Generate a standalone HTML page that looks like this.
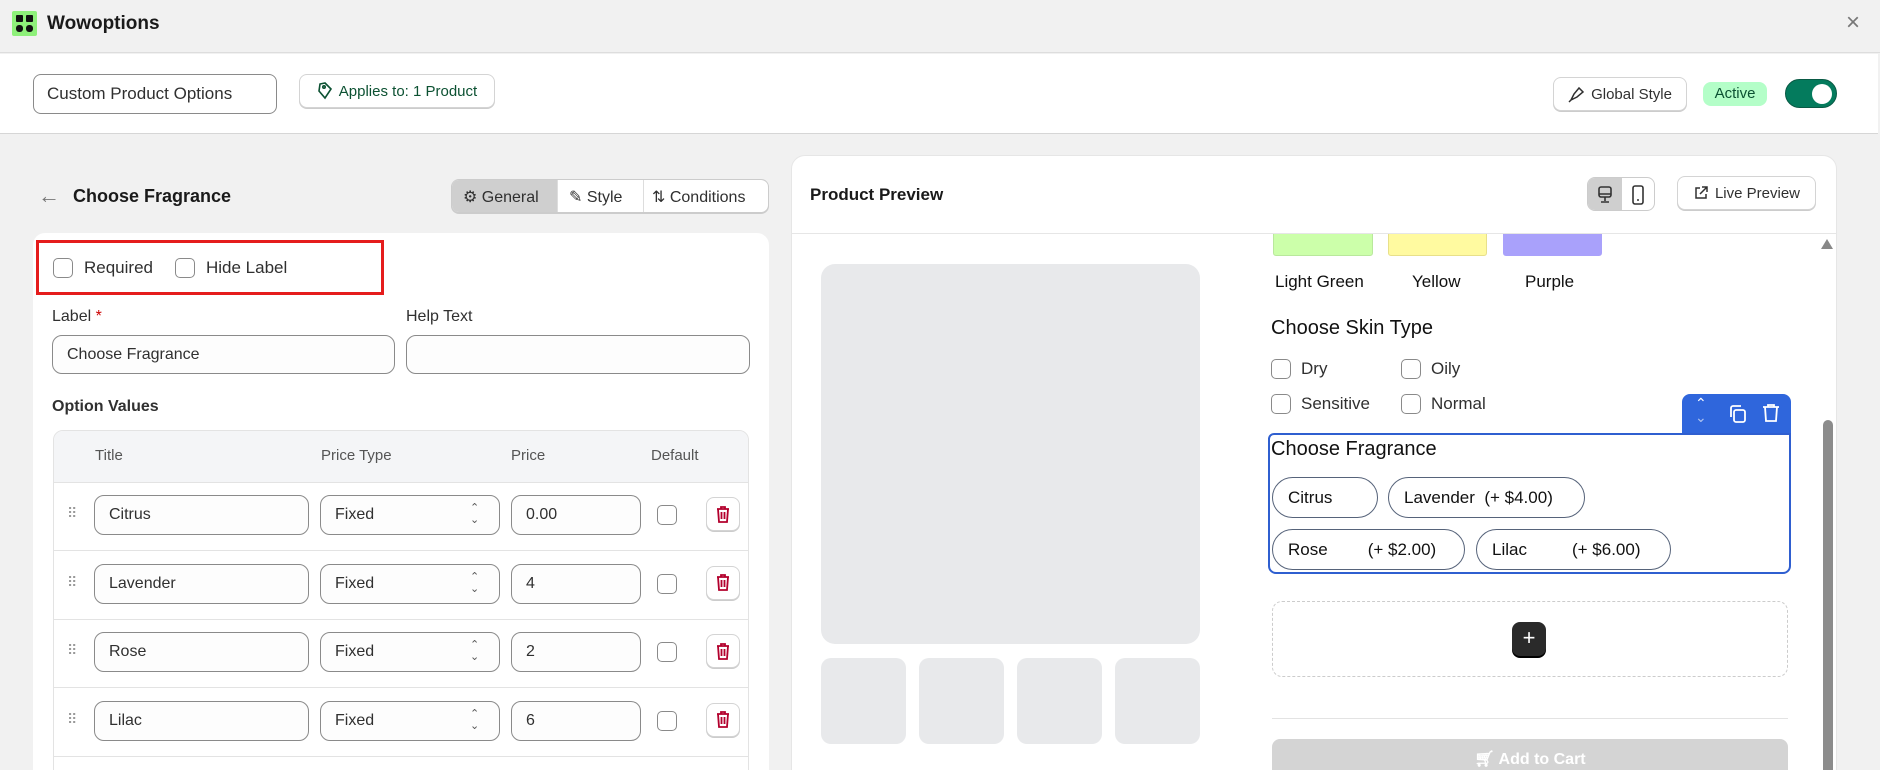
<!DOCTYPE html>
<html style="overflow:hidden;width:1880px;height:770px"><head><meta charset="utf-8"><style>
*{box-sizing:border-box;margin:0;padding:0}
body{width:1880px;height:770px;overflow:hidden;background:#f1f1f1;font-family:"Liberation Sans",sans-serif;color:#303030;position:relative;font-size:16px}
.a{position:absolute}
.box{position:absolute;border:1px solid #8a8a8a;border-radius:10px;background:#fdfdfd}
.btn{position:absolute;border:1px solid #d4d4d4;border-radius:8px;background:#fff;box-shadow:0 1px 0 #ccc;display:flex;align-items:center;justify-content:center;gap:6px;font-size:15px;color:#303030}
.cb{position:absolute;width:20px;height:20px;border:1.5px solid #8a8a8a;border-radius:5px;background:#fff}
.t{position:absolute;white-space:nowrap}
.chip{position:absolute;border:1px solid #56637a;border-radius:22px;height:41px;display:flex;align-items:center;font-size:17px;color:#111}
</style></head><body>
<div class="a" style="left:0;top:0;width:1880px;height:53px;background:#f1f1f1;border-bottom:1px solid #ddd"></div>
<div class="a" style="left:12px;top:11px;width:25px;height:25px;background:#8ef07a;border-radius:2px"></div>
<div class="a" style="left:16px;top:15px;width:7px;height:7px;background:#111;border-radius:1px"></div>
<div class="a" style="left:26px;top:15px;width:7px;height:7px;background:#111;border-radius:1px"></div>
<div class="a" style="left:16px;top:25px;width:7px;height:7px;background:#111;border-radius:3px"></div>
<div class="a" style="left:26px;top:25px;width:7px;height:7px;background:#111;border-radius:3px"></div>
<div class="t" style="left:47px;top:13px;font-size:19px;font-weight:bold;color:#1a1a1a">Wowoptions</div>
<div class="t" style="left:1846px;top:9px;font-size:24px;color:#777">×</div>
<div class="a" style="left:0;top:54px;width:1878px;height:80px;background:#fff;border-bottom:1px solid #d6d6d6"></div>
<div class="box" style="left:33px;top:74px;width:244px;height:40px;border-radius:8px;background:#fff"></div>
<div class="t" style="left:47px;top:84px;font-size:17px;color:#303030">Custom Product Options</div>
<div class="btn" style="left:299px;top:74px;width:196px;height:34px;color:#0c5132;font-size:15px">
<svg width="16" height="18" viewBox="0 0 16 18" fill="none" stroke="#0c5132" stroke-width="1.6"><path d="M8 1 L14 7 L8 16 L2 9 L3 2 Z"/><circle cx="7" cy="5" r="1.2"/></svg>Applies to: 1 Product</div>
<div class="btn" style="left:1553px;top:77px;width:134px;height:34px">
<svg width="17" height="17" viewBox="0 0 17 17" fill="none" stroke="#303030" stroke-width="1.5"><path d="M3 14 L6 8 L11 2 L15 6 L9 11 Z M3 14 L1 16"/></svg>Global Style</div>
<div class="a" style="left:1703px;top:82px;width:64px;height:24px;background:#b4fec8;border-radius:8px;color:#0c5132;font-size:15px;text-align:center;line-height:24px">Active</div>
<div class="a" style="left:1785px;top:79px;width:52px;height:29px;background:#047b5d;border-radius:15px;border:1.5px solid #0a5a45"></div>
<div class="a" style="left:1812px;top:84px;width:20px;height:20px;background:#fff;border-radius:50%"></div>

<div class="t" style="left:38px;top:183px;font-size:22px;color:#777">←</div>
<div class="t" style="left:73px;top:186px;font-size:18px;font-weight:bold;color:#1a1a1a">Choose Fragrance</div>
<div class="a" style="left:451px;top:179px;width:318px;height:34px;border:1px solid #ccc;border-radius:8px;background:#fff;overflow:hidden;box-shadow:0 1px 0 #ccc">
<div class="a" style="left:0;top:0;width:105px;height:34px;background:#cfcfcf"></div>
<div class="a" style="left:105px;top:0;width:1px;height:34px;background:#ddd"></div>
<div class="a" style="left:191px;top:0;width:1px;height:34px;background:#ddd"></div>
<div class="t" style="left:11px;top:7px;font-size:16px">⚙ General</div>
<div class="t" style="left:117px;top:7px;font-size:16px">✎ Style</div>
<div class="t" style="left:200px;top:7px;font-size:16px">⇅ Conditions</div>
</div>
<div class="a" style="left:33px;top:233px;width:736px;height:537px;background:#fff;border-radius:12px 12px 0 0"></div>
<div class="a" style="left:36px;top:240px;width:348px;height:55px;border:3px solid #e51c1c"></div>
<div class="cb" style="left:53px;top:258px"></div><div class="t" style="left:84px;top:258px;font-size:17px">Required</div>
<div class="cb" style="left:175px;top:258px"></div><div class="t" style="left:206px;top:258px;font-size:17px">Hide Label</div>
<div class="t" style="left:52px;top:308px;font-size:16px">Label <span style="color:#c00">*</span></div>
<div class="t" style="left:406px;top:308px;font-size:16px">Help Text</div>
<div class="box" style="left:52px;top:335px;width:343px;height:39px"></div>
<div class="t" style="left:67px;top:346px;font-size:16px">Choose Fragrance</div>
<div class="box" style="left:406px;top:335px;width:344px;height:39px"></div>
<div class="t" style="left:52px;top:398px;font-size:16px;font-weight:bold">Option Values</div>
<div class="a" style="left:53px;top:430px;width:696px;height:345px;border:1px solid #e3e3e3;border-radius:10px 10px 0 0;background:#fff;overflow:hidden">
<div class="a" style="left:0;top:0;width:696px;height:52px;background:#f4f5f7;border-bottom:1px solid #e3e3e3"></div>
</div>
<div class="t" style="left:95px;top:447px;font-size:15px;color:#555">Title</div>
<div class="t" style="left:321px;top:447px;font-size:15px;color:#555">Price Type</div>
<div class="t" style="left:511px;top:447px;font-size:15px;color:#555">Price</div>
<div class="t" style="left:651px;top:447px;font-size:15px;color:#555">Default</div>

<div id="rows"></div>

<div class="a" style="left:791px;top:155px;width:1046px;height:620px;background:#fff;border-radius:14px 14px 0 0;border:1px solid #e6e6e6"></div>
<div class="t" style="left:810px;top:185px;font-size:17px;font-weight:bold;color:#1a1a1a">Product Preview</div>
<div class="a" style="left:791px;top:233px;width:1046px;height:1px;background:#e6e6e6"></div>
<div class="a" style="left:1587px;top:177px;width:68px;height:34px;border:1px solid #ccc;border-radius:8px;overflow:hidden;background:#fff">
<div class="a" style="left:0;top:0;width:34px;height:34px;background:#cfcfcf"></div>
<svg class="a" style="left:9px;top:8px" width="16" height="18" viewBox="0 0 16 18" fill="none" stroke="#333" stroke-width="1.6"><rect x="2" y="1" width="12" height="10" rx="2"/><path d="M2 8H14M8 11V15M4 16H12"/></svg>
<svg class="a" style="left:44px;top:7px" width="12" height="20" viewBox="0 0 12 20" fill="none" stroke="#333" stroke-width="1.6"><rect x="1" y="1" width="10" height="18" rx="2"/><path d="M5 15H7"/></svg>
</div>
<div class="btn" style="left:1677px;top:176px;width:139px;height:34px">
<svg width="16" height="16" viewBox="0 0 16 16" fill="none" stroke="#303030" stroke-width="1.5"><path d="M7 3H3V13H13V9M9 2H14V7M14 2L7 9"/></svg>Live Preview</div>

<div class="a" style="left:821px;top:264px;width:379px;height:380px;background:#e8e9eb;border-radius:14px"></div>
<div class="a" style="left:821px;top:658px;width:85px;height:86px;background:#e8e9eb;border-radius:10px"></div>
<div class="a" style="left:919px;top:658px;width:85px;height:86px;background:#e8e9eb;border-radius:10px"></div>
<div class="a" style="left:1017px;top:658px;width:85px;height:86px;background:#e8e9eb;border-radius:10px"></div>
<div class="a" style="left:1115px;top:658px;width:85px;height:86px;background:#e8e9eb;border-radius:10px"></div>

<div class="a" style="left:1273px;top:234px;width:100px;height:22px;background:#ccffaa;border:1px solid #b9e89c;border-top:0;border-radius:0 0 3px 3px"></div>
<div class="a" style="left:1388px;top:234px;width:99px;height:22px;background:#fffaa0;border:1px solid #e8e08a;border-top:0;border-radius:0 0 3px 3px"></div>
<div class="a" style="left:1503px;top:234px;width:99px;height:22px;background:#a9a1fb;border-radius:0 0 3px 3px"></div>
<div class="t" style="left:1275px;top:272px;font-size:17px;color:#111">Light Green</div>
<div class="t" style="left:1412px;top:272px;font-size:17px;color:#111">Yellow</div>
<div class="t" style="left:1525px;top:272px;font-size:17px;color:#111">Purple</div>
<div class="a" style="left:1821px;top:239px;width:0;height:0;border-left:6px solid transparent;border-right:6px solid transparent;border-bottom:10px solid #888"></div>
<div class="a" style="left:1823px;top:420px;width:10px;height:360px;background:#8c8c8c;border-radius:5px"></div>

<div class="t" style="left:1271px;top:317px;font-size:20px;color:#111">Choose Skin Type</div>
<div class="cb" style="left:1271px;top:359px"></div><div class="t" style="left:1301px;top:359px;font-size:17px">Dry</div>
<div class="cb" style="left:1401px;top:359px"></div><div class="t" style="left:1431px;top:359px;font-size:17px">Oily</div>
<div class="cb" style="left:1271px;top:394px"></div><div class="t" style="left:1301px;top:394px;font-size:17px">Sensitive</div>
<div class="cb" style="left:1401px;top:394px"></div><div class="t" style="left:1431px;top:394px;font-size:17px">Normal</div>

<div class="a" style="left:1682px;top:394px;width:109px;height:40px;background:#2f66dc;border-radius:8px 8px 0 0"></div>
<div class="t" style="left:1695px;top:396px;color:#fff;font-size:14px;line-height:14px">⌃<br><span style="opacity:.6">⌄</span></div>
<svg class="a" style="left:1728px;top:404px" width="20" height="20" viewBox="0 0 20 20" fill="none" stroke="#fff" stroke-width="1.8"><rect x="6" y="6" width="11" height="12" rx="2"/><path d="M3 13V4a2 2 0 0 1 2-2h8"/></svg>
<svg class="a" style="left:1762px;top:403px" width="18" height="20" viewBox="0 0 18 20" fill="none" stroke="#fff" stroke-width="1.8"><path d="M1 4H17M6 4V2H12V4M3 4L4 18H14L15 4"/></svg>
<div class="a" style="left:1268px;top:433px;width:523px;height:141px;border:2px solid #2f5fd0;border-radius:0 0 8px 8px;border-top-left-radius:6px"></div>
<div class="t" style="left:1271px;top:438px;font-size:20px;color:#111">Choose Fragrance</div>
<div class="chip" style="left:1272px;top:477px;width:106px;padding-left:15px">Citrus</div>
<div class="chip" style="left:1388px;top:477px;width:197px;padding-left:15px">Lavender&nbsp;&nbsp;(+ $4.00)</div>
<div class="chip" style="left:1272px;top:529px;width:193px;padding-left:15px">Rose<span style="margin-left:40px">(+ $2.00)</span></div>
<div class="chip" style="left:1476px;top:529px;width:195px;padding-left:15px">Lilac<span style="margin-left:45px">(+ $6.00)</span></div>
<div class="a" style="left:1272px;top:601px;width:516px;height:76px;border:1px dashed #ccc;border-radius:10px"></div>
<div class="a" style="left:1512px;top:622px;width:34px;height:34px;background:#2a2a2a;border-radius:8px;color:#fff;text-align:center;line-height:32px;font-size:22px;box-shadow:0 2px 0 #000">+</div>
<div class="a" style="left:1272px;top:718px;width:516px;height:1px;background:#e3e3e3"></div>
<div class="a" style="left:1272px;top:739px;width:516px;height:40px;background:#d4d4d4;border-radius:8px;color:#fff;font-weight:bold;font-size:16px;text-align:center;padding-top:10px">🛒︎ Add to Cart</div>

<script>
var d=[["Citrus","0.00"],["Lavender","4"],["Rose","2"],["Lilac","6"]],h="";
d.forEach(function(r,i){var y=495+i*68.5;
h+='<div class="t" style="left:67px;top:'+(y+10)+'px;color:#999;font-size:14px;letter-spacing:-1px">⠿</div>';
h+='<div class="box" style="left:94px;top:'+y+'px;width:215px;height:40px"></div><div class="t" style="left:109px;top:'+(y+11)+'px;font-size:16px">'+r[0]+'</div>';
h+='<div class="box" style="left:320px;top:'+y+'px;width:180px;height:40px"></div><div class="t" style="left:335px;top:'+(y+11)+'px;font-size:16px">Fixed</div><div class="t" style="left:470px;top:'+(y+7)+'px;font-size:11px;line-height:12px;color:#555">⌃<br>⌄</div>';
h+='<div class="box" style="left:511px;top:'+y+'px;width:130px;height:40px"></div><div class="t" style="left:526px;top:'+(y+11)+'px;font-size:16px">'+r[1]+'</div>';
h+='<div class="cb" style="left:657px;top:'+(y+10)+'px"></div>';
h+='<div class="btn" style="left:706px;top:'+(y+2)+'px;width:34px;height:34px"><svg width="14" height="17" viewBox="0 0 14 17" fill="none" stroke="#b3002d" stroke-width="1.8"><path d="M1 3H13M5 3V1H9V3M2 3L3 16H11L12 3M5.5 6V13M8.5 6V13"/></svg></div>';
h+='<div class="a" style="left:54px;top:'+(y+55)+'px;width:694px;height:1px;background:#e3e3e3"></div>';
});
document.getElementById("rows").innerHTML=h;
</script>
</body></html>
